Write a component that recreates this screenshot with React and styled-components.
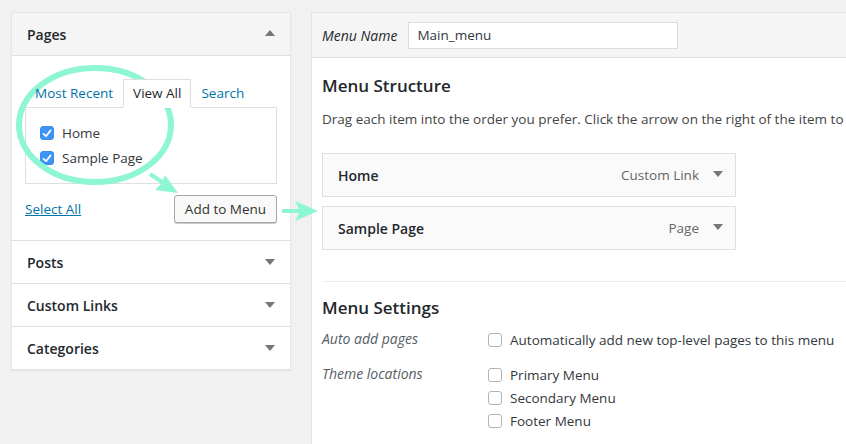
import React from 'react';
import styled, { createGlobalStyle } from 'styled-components';

const GlobalStyle = createGlobalStyle`
  html, body {
    margin: 0;
    padding: 0;
    background: #f1f1f1;
    font-family: "Open Sans", "Liberation Sans", sans-serif;
    font-size: 13.5px;
    color: #23282d;
    overflow: hidden;
  }
`;

const Caret = ({ up }) => (
  <svg width="10" height="6" viewBox="0 0 10 6">
    <path d={up ? 'M0 6 L5 0 L10 6 Z' : 'M0 0 L10 0 L5 6 Z'} fill="#72777c" />
  </svg>
);

const Check = ({ checked }) => (
  <CheckBox checked={checked}>
    {checked && (
      <svg width="10" height="9" viewBox="0 0 10 9">
        <path d="M1.5 4.8 L4 7.2 L8.6 1.4" stroke="#fff" strokeWidth="1.7" fill="none" strokeLinecap="round" strokeLinejoin="round" />
      </svg>
    )}
  </CheckBox>
);

const App = () => (
  <>
    <GlobalStyle />
    <Page>
      <Sidebar>
        <Section open>
          <SectionHead open>
            Pages
            <Caret up />
          </SectionHead>
          <SectionBody>
            <Tabs>
              <Tab>Most Recent</Tab>
              <Tab active>View All</Tab>
              <Tab>Search</Tab>
            </Tabs>
            <TabPanel>
              <CheckRow>
                <Check checked />
                Home
              </CheckRow>
              <CheckRow>
                <Check checked />
                Sample Page
              </CheckRow>
            </TabPanel>
            <Actions>
              <SelectAll>Select All</SelectAll>
              <Button>Add to Menu</Button>
            </Actions>
          </SectionBody>
        </Section>
        {['Posts', 'Custom Links', 'Categories'].map(t => (
          <Section key={t}>
            <SectionHead>
              {t}
              <Caret />
            </SectionHead>
          </Section>
        ))}
      </Sidebar>

      <Main>
        <MainHead>
          <NameLabel>Menu Name</NameLabel>
          <NameInput>Main_menu</NameInput>
        </MainHead>
        <MainBody>
          <Heading>Menu Structure</Heading>
          <Desc>Drag each item into the order you prefer. Click the arrow on the right of the item to</Desc>
          <Items>
            <Item>
              <ItemTitle>Home</ItemTitle>
              <ItemType>Custom Link</ItemType>
              <Caret />
            </Item>
            <Item>
              <ItemTitle>Sample Page</ItemTitle>
              <ItemType>Page</ItemType>
              <Caret />
            </Item>
          </Items>
          <Divider />
          <Heading settings>Menu Settings</Heading>
          <SettingsGrid>
            <SetLabel>Auto add pages</SetLabel>
            <Options>
              <Option>
                <Check />
                Automatically add new top-level pages to this menu
              </Option>
            </Options>
            <SetLabel>Theme locations</SetLabel>
            <Options>
              <Option>
                <Check />
                Primary Menu
              </Option>
              <Option>
                <Check />
                Secondary Menu
              </Option>
              <Option>
                <Check />
                Footer Menu
              </Option>
            </Options>
          </SettingsGrid>
        </MainBody>
      </Main>

      <Annotation width="846" height="444" viewBox="0 0 846 444">
        <ellipse cx="95" cy="125" rx="76" ry="57" fill="none" stroke="#8ef6d3" strokeWidth="6" />
        <path d="M150 174 L168 186" stroke="#8ef6d3" strokeWidth="4" />
        <path d="M178 193 L155 190 L161 184 L165 175 Z" fill="#8ef6d3" />
        <path d="M282 211 L302 211" stroke="#8ef6d3" strokeWidth="4" />
        <path d="M318 211 L295 201 L300 211 L295 221 Z" fill="#8ef6d3" />
      </Annotation>
    </Page>
  </>
);

export default App;

const Page = styled.div`
  position: relative;
  display: flex;
  align-items: flex-start;
  gap: 20px;
  padding: 12px 0 0 11px;
  height: 444px;
  box-sizing: border-box;
  width: 846px;
  overflow: hidden;
`;

const Annotation = styled.svg`
  position: absolute;
  top: 0;
  left: 0;
  pointer-events: none;
`;

const Sidebar = styled.div`
  width: 280px;
  flex: none;
  background: #fff;
  border: 1px solid #e5e5e5;
  box-sizing: border-box;
  box-shadow: 0 1px 1px rgba(0, 0, 0, 0.05);
`;

const Section = styled.div`
  & + & {
    border-top: 1px solid #dfdfdf;
  }
`;

const SectionHead = styled.div`
  height: 42px;
  display: flex;
  align-items: center;
  justify-content: space-between;
  padding: 0 15px;
  font-size: 14px;
  font-weight: 600;
  color: #23282d;
  background: ${p => (p.open ? '#f5f5f5' : '#fff')};
  border-bottom: ${p => (p.open ? '1px solid #dfdfdf' : 'none')};
  svg {
    margin-top: ${p => (p.open ? '-2px' : '0')};
  }
`;

const SectionBody = styled.div`
  padding: 23px 13px 17px 13px;
`;

const Tabs = styled.div`
  display: flex;
  align-items: flex-end;
  height: 28px;
  position: relative;
  z-index: 1;
`;

const Tab = styled.div`
  box-sizing: border-box;
  padding: 4px 9px 0;
  font-size: 13.5px;
  color: ${p => (p.active ? '#23282d' : '#0073aa')};
  border: 1px solid ${p => (p.active ? '#dfdfdf' : 'transparent')};
  border-bottom: 1px solid ${p => (p.active ? '#fff' : 'transparent')};
  background: ${p => (p.active ? '#fff' : 'transparent')};
  height: ${p => (p.active ? '29px' : '28px')};
  margin-bottom: ${p => (p.active ? '-1px' : '0')};
`;

const TabPanel = styled.div`
  border: 1px solid #dfdfdf;
  height: 77px;
  box-sizing: border-box;
  padding: 17px 14px 0;
  display: flex;
  flex-direction: column;
  gap: 9px;
`;

const CheckRow = styled.label`
  display: flex;
  align-items: center;
  gap: 8px;
  font-size: 13.5px;
  color: #32373c;
  height: 16px;
`;

const CheckBox = styled.span`
  width: 14px;
  height: 14px;
  flex: none;
  box-sizing: border-box;
  border-radius: 3px;
  display: inline-flex;
  align-items: center;
  justify-content: center;
  background: ${p => (p.checked ? '#3c95f4' : '#fff')};
  border: 1px solid ${p => (p.checked ? '#3c8ee8' : '#b4b4b4')};
`;

const Actions = styled.div`
  display: flex;
  justify-content: space-between;
  align-items: center;
  margin-top: 11px;
`;

const SelectAll = styled.a`
  color: #0073aa;
  text-decoration: underline;
  font-size: 13.5px;
`;

const Button = styled.button`
  font-family: inherit;
  font-size: 13.5px;
  color: #333;
  height: 28px;
  width: 103px;
  padding: 0;
  background: #f9f9f9;
  border: 1px solid #a6a6a6;
  border-radius: 3px;
  box-shadow: 0 1px 0 #ccc;
`;

const Main = styled.div`
  flex: none;
  width: 620px;
  height: 460px;
  background: #fff;
  border: 1px solid #e5e5e5;
  box-sizing: border-box;
`;

const MainHead = styled.div`
  height: 44px;
  background: #f5f5f5;
  border-bottom: 1px solid #dfdfdf;
  display: flex;
  align-items: center;
  padding-left: 10px;
  gap: 11px;
`;

const NameLabel = styled.span`
  font-style: italic;
  font-size: 14px;
  color: #23282d;
`;

const NameInput = styled.div`
  width: 270px;
  height: 27px;
  box-sizing: border-box;
  background: #fff;
  border: 1px solid #ddd;
  display: flex;
  align-items: center;
  padding-left: 8px;
  font-size: 13.5px;
  color: #32373c;
`;

const MainBody = styled.div`
  padding: 16px 0 0 10px;
`;

const Heading = styled.h3`
  margin: ${p => (p.settings ? '14px 0 10px' : '0 0 11px')};
  font-size: 17px;
  font-weight: 600;
  color: #23282d;
  line-height: 24px;
`;

const Desc = styled.p`
  margin: 0;
  white-space: nowrap;
  font-size: 13.5px;
  line-height: 20px;
  color: #444;
`;

const Items = styled.div`
  display: flex;
  flex-direction: column;
  gap: 9px;
  margin-top: 24px;
`;

const Item = styled.div`
  width: 414px;
  height: 44px;
  box-sizing: border-box;
  background: #fafafa;
  border: 1px solid #dfdfdf;
  display: flex;
  align-items: center;
  padding: 0 12px 0 15px;
  gap: 14px;
  svg {
    margin-top: -3px;
  }
`;

const ItemTitle = styled.span`
  flex: 1;
  font-weight: 600;
  font-size: 14px;
  color: #23282d;
`;

const ItemType = styled.span`
  font-size: 13.5px;
  color: #666;
`;

const Divider = styled.div`
  height: 1px;
  background: #eee;
  margin-top: 31px;
`;

const SettingsGrid = styled.div`
  display: grid;
  grid-template-columns: 166px 1fr;
  row-gap: 16px;
`;

const SetLabel = styled.div`
  font-style: italic;
  font-size: 14px;
  color: #555d66;
  line-height: 18px;
`;

const Options = styled.div`
  display: flex;
  flex-direction: column;
  gap: 5px;
  padding-top: 1px;
`;

const Option = styled.label`
  display: flex;
  align-items: center;
  gap: 8px;
  font-size: 13.5px;
  color: #32373c;
  line-height: 18px;
`;
